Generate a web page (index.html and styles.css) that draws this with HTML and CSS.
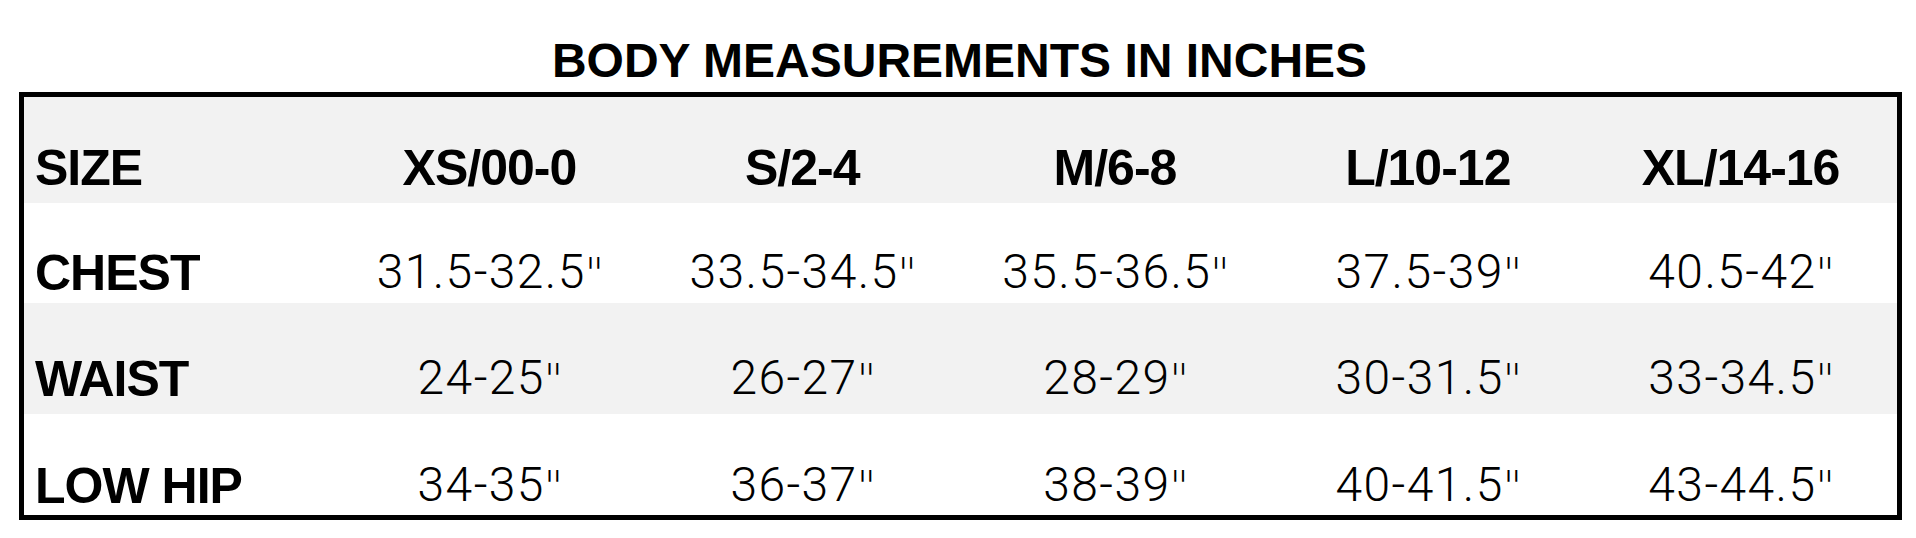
FILE: index.html
```html
<!DOCTYPE html>
<html>
<head>
<meta charset="utf-8">
<title>Body Measurements</title>
<link rel="stylesheet" href="styles.css">
</head>
<body>
<h1 class="title">BODY MEASUREMENTS IN INCHES</h1>
<div class="chart">
  <div class="row row-head shade">
    <div class="label">SIZE</div>
    <div class="cell head">XS/00-0</div>
    <div class="cell head">S/2-4</div>
    <div class="cell head">M/6-8</div>
    <div class="cell head">L/10-12</div>
    <div class="cell head">XL/14-16</div>
  </div>
  <div class="row row-chest">
    <div class="label">CHEST</div>
    <div class="cell">31.5-32.5<span class="inch">"</span></div>
    <div class="cell">33.5-34.5<span class="inch">"</span></div>
    <div class="cell">35.5-36.5<span class="inch">"</span></div>
    <div class="cell">37.5-39<span class="inch">"</span></div>
    <div class="cell">40.5-42<span class="inch">"</span></div>
  </div>
  <div class="row row-waist shade">
    <div class="label">WAIST</div>
    <div class="cell">24-25<span class="inch">"</span></div>
    <div class="cell">26-27<span class="inch">"</span></div>
    <div class="cell">28-29<span class="inch">"</span></div>
    <div class="cell">30-31.5<span class="inch">"</span></div>
    <div class="cell">33-34.5<span class="inch">"</span></div>
  </div>
  <div class="row row-hip">
    <div class="label">LOW HIP</div>
    <div class="cell">34-35<span class="inch">"</span></div>
    <div class="cell">36-37<span class="inch">"</span></div>
    <div class="cell">38-39<span class="inch">"</span></div>
    <div class="cell">40-41.5<span class="inch">"</span></div>
    <div class="cell">43-44.5<span class="inch">"</span></div>
  </div>
</div>
</body>
</html>
```
FILE: styles.css
```css
html, body {
  margin: 0;
  padding: 0;
  background: #ffffff;
}

body {
  width: 1916px;
  color: #000000;
  font-family: "Liberation Sans", Arial, sans-serif;
}

.title {
  margin: 37px 0 0 0;
  height: 48px;
  font-size: 48px;
  line-height: 48px;
  font-weight: 700;
  text-align: center;
  padding-left: 3px;
}

.chart {
  margin: 7px 0 0 19px;
  width: 1873px;
  border: 5px solid #000000;
}

.row {
  display: grid;
  grid-template-columns: 309px repeat(5, 1fr);
  align-items: end;
  background: #ffffff;
}

.shade {
  background: #f2f2f2;
}

.row-head {
  height: 106px;
  padding-bottom: 10px;
  box-sizing: border-box;
}

.row-chest {
  height: 100px;
  padding-bottom: 5px;
  box-sizing: border-box;
}

.row-waist {
  height: 111px;
  padding-bottom: 10px;
  box-sizing: border-box;
}

.row-hip {
  height: 101px;
  padding-bottom: 4px;
  box-sizing: border-box;
}

.label {
  padding-left: 11px;
  font-family: "Liberation Sans", Arial, sans-serif;
  font-weight: 700;
  font-size: 50px;
  line-height: 50px;
  letter-spacing: -1px;
}

.cell {
  text-align: center;
  font-family: Roboto, "Liberation Sans", sans-serif;
  font-weight: 300;
  font-size: 48px;
  line-height: 48px;
  letter-spacing: 1.4px;
  padding-left: 2px;
}

.inch {
  font-family: "DejaVu Sans", Roboto, sans-serif;
  font-weight: 200;
  font-size: 42px;
  letter-spacing: 0;
  margin-left: -1px;
}

.cell.head {
  font-family: "Liberation Sans", Arial, sans-serif;
  font-weight: 700;
  font-size: 50px;
  line-height: 50px;
  letter-spacing: -1px;
  padding-left: 0;
}
```
